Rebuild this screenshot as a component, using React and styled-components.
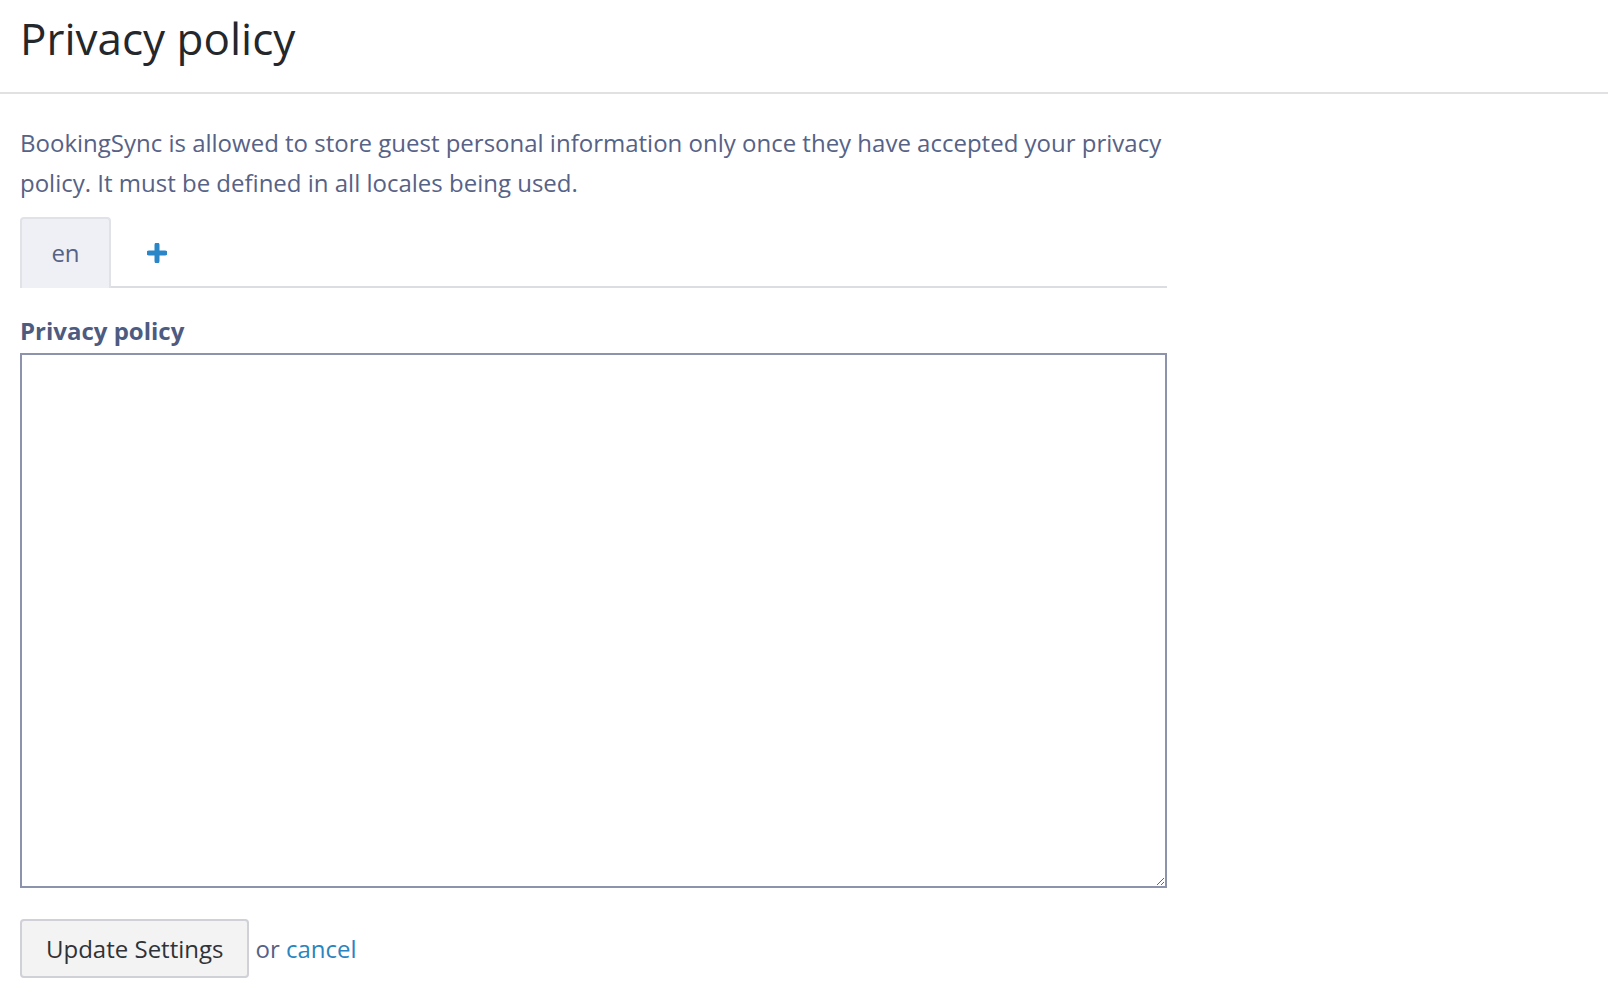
import styled, { createGlobalStyle } from 'styled-components'

const GlobalStyle = createGlobalStyle`
  html, body {
    margin: 0;
    padding: 0;
    background: #fff;
  }
  body {
    font-family: "Open Sans", "Noto Sans", "Liberation Sans", sans-serif;
    color: #566286;
  }
`

const Header = styled.header`
  box-sizing: border-box;
  height: 94px;
  padding: 12px 20px 0;
  border-bottom: 2px solid #dfe1e3;
`

const Title = styled.h1`
  margin: 0;
  font-size: 44px;
  font-weight: 400;
  line-height: 1.2;
  color: #24272c;
`

const Content = styled.main`
  width: 1147px;
  padding: 29px 20px 0;
`

const Intro = styled.p`
  margin: 0 0 14px;
  font-size: 24px;
  line-height: 40px;
  color: #566286;
`

const TabList = styled.div`
  display: flex;
  border-bottom: 2px solid #dcdde0;
`

const Tab = styled.button`
  box-sizing: border-box;
  width: 91px;
  padding: 18px 0 20px;
  margin-bottom: -2px;
  font-family: inherit;
  font-size: 24px;
  line-height: 31px;
  color: #566286;
  background: ${p => (p.$active ? '#eef0f5' : 'transparent')};
  border: 2px solid ${p => (p.$active ? '#e1e2e7' : 'transparent')};
  border-bottom: none;
  border-radius: 4px 4px 0 0;
  display: flex;
  align-items: center;
  justify-content: center;
  cursor: pointer;
`

const Label = styled.label`
  display: block;
  margin: 27px 0 7px;
  font-size: 24px;
  font-weight: 700;
  line-height: 31px;
  color: #4e5b80;
`

const TextArea = styled.textarea`
  display: block;
  box-sizing: border-box;
  width: 100%;
  height: 535px;
  margin: 0;
  padding: 8px 12px;
  font-family: inherit;
  font-size: 24px;
  border: 2px solid #8d93aa;
  border-radius: 0;
  outline: none;
  resize: vertical;
`

const Actions = styled.div`
  display: flex;
  align-items: center;
  gap: 6px;
  margin-top: 31px;
  font-size: 24px;
  color: #566286;
`

const Button = styled.button`
  box-sizing: border-box;
  height: 59px;
  padding: 0 24px;
  font-family: inherit;
  font-size: 24px;
  color: #2f3236;
  background: #f3f3f4;
  border: 2px solid #cfd0d8;
  border-radius: 4px;
  cursor: pointer;
`

const Link = styled.a`
  color: #2b84c0;
  text-decoration: none;
`

function PlusIcon() {
  return (
    <svg width="20" height="20" viewBox="0 0 20 20">
      <path d="M10 2v16M2 10h16" stroke="#2b86c8" strokeWidth="5" strokeLinecap="round" />
    </svg>
  )
}

export default function App() {
  return (
    <>
      <GlobalStyle />
      <Header>
        <Title>Privacy policy</Title>
      </Header>
      <Content>
        <Intro>
          BookingSync is allowed to store guest personal information only once they have accepted your privacy
          policy. It must be defined in all locales being used.
        </Intro>
        <TabList>
          <Tab $active>en</Tab>
          <Tab aria-label="Add locale"><PlusIcon /></Tab>
        </TabList>
        <Label htmlFor="privacy-policy">Privacy policy</Label>
        <TextArea id="privacy-policy" />
        <Actions>
          <Button>Update Settings</Button>
          <span>or <Link href="#">cancel</Link></span>
        </Actions>
      </Content>
    </>
  )
}
